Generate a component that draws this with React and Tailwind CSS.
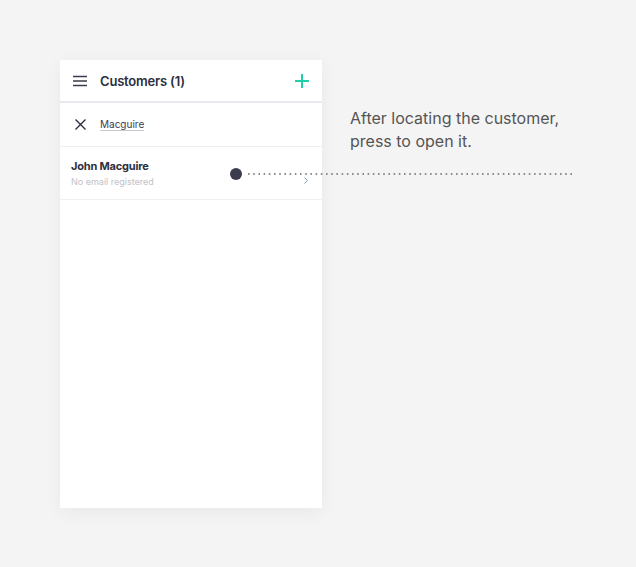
import React from 'react';

const font = { fontFamily: 'Inter, Lato, sans-serif' };

const App = () => {
    return (
        <div className="relative w-[636px] h-[567px] bg-[#f4f4f4] overflow-hidden" style={font}>
            <div className="flex pt-[60px] pl-[60px]">
                {/* phone panel */}
                <div className="w-[262px] h-[448px] bg-white shadow-[0_4px_18px_rgba(0,0,0,0.05)]">
                    <div className="h-[43px] flex items-center pl-[13px] pr-[13px] border-b-2 border-[#e7e9ef]">
                        <svg width="14" height="12" viewBox="0 0 14 12" className="text-[#3b3d4e]">
                            <path d="M0 1.5h14M0 6h14M0 10.5h14" stroke="currentColor" strokeWidth="1.6" />
                        </svg>
                        <span className="ml-[13px] mt-[2px] text-[13px] font-semibold text-[#2c2f40] tracking-[-0.2px]">Customers (1)</span>
                        <svg width="14" height="14" viewBox="0 0 14 14" className="ml-auto text-[#1fcfa6]">
                            <path d="M7 0v14M0 7h14" stroke="currentColor" strokeWidth="2" />
                        </svg>
                    </div>
                    <div className="h-[44px] flex items-center pl-[15px] border-b border-[#f0f0f2]">
                        <svg width="11" height="11" viewBox="0 0 11 11" className="text-[#2c2f40]">
                            <path d="M0.5 0.5l10 10M10.5 0.5l-10 10" stroke="currentColor" strokeWidth="1.4" />
                        </svg>
                        <span className="ml-[14px] text-[10px] text-[#3b3d4e] underline decoration-[#c8c9d0] underline-offset-2">Macguire</span>
                    </div>
                    <div className="h-[53px] flex items-center pl-[11px] pr-[14px] border-b border-[#f0f0f2]">
                        <div className="flex flex-col mt-[2px]">
                            <span className="text-[11px] font-bold text-[#2c2f40] leading-[15px] tracking-[-0.2px]">John Macguire</span>
                            <span className="text-[9px] text-[#c2c2c6] leading-[15px]">No email registered</span>
                        </div>
                        <svg width="4" height="7" viewBox="0 0 4 7" className="ml-auto mt-[14px] text-[#8a9bb5]">
                            <path d="M0.5 0.5l3 3-3 3" fill="none" stroke="currentColor" strokeWidth="1" />
                        </svg>
                    </div>
                </div>

                {/* annotation */}
                <div className="ml-[28px] pt-[47px] text-[16px] leading-[23px] text-[#555555]">
                    <p>After locating the customer,</p>
                    <p>press to open it.</p>
                </div>
            </div>

            {/* pointer */}
            <div className="absolute left-[230px] top-[168px] flex items-center">
                <div className="w-[12px] h-[12px] rounded-full bg-[#3b3d4e]" />
                <svg width="325" height="2" className="ml-[6px]">
                    <line x1="0" y1="1" x2="325" y2="1" stroke="#6a6a6a" strokeWidth="1.6" strokeDasharray="1.6 3.6" />
                </svg>
            </div>
        </div>
    );
};

export default App;
